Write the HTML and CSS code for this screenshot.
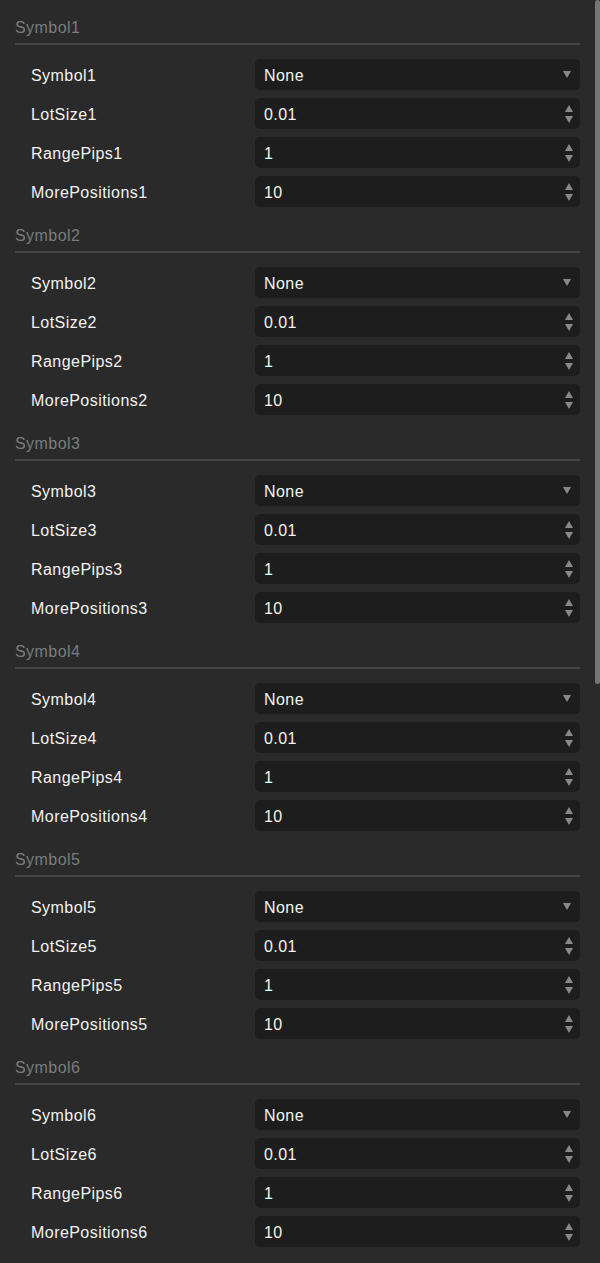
FILE: index.html
```html
<!DOCTYPE html>
<html>
<head>
<meta charset="utf-8">
<link rel="stylesheet" href="styles.css">
</head>
<body>
<div class="panel">
  <div id="sections"></div>
</div>
<div class="scroll-thumb"></div>
<script>
  var html = '';
  for (var i = 1; i <= 6; i++) {
    html += '<section class="group">' +
      '<div class="group-title">Symbol' + i + '</div>' +
      '<div class="rows">' +
        '<div class="row"><span class="label">Symbol' + i + '</span><div class="field select"><span class="value">None</span><span class="caret"></span></div></div>' +
        '<div class="row"><span class="label">LotSize' + i + '</span><div class="field spin"><span class="value">0.01</span><span class="spinner"><i class="up"></i><i class="down"></i></span></div></div>' +
        '<div class="row"><span class="label">RangePips' + i + '</span><div class="field spin"><span class="value">1</span><span class="spinner"><i class="up"></i><i class="down"></i></span></div></div>' +
        '<div class="row"><span class="label">MorePositions' + i + '</span><div class="field spin"><span class="value">10</span><span class="spinner"><i class="up"></i><i class="down"></i></span></div></div>' +
      '</div>' +
    '</section>';
  }
  document.getElementById('sections').innerHTML = html;
</script>
</body>
</html>
```

FILE: styles.css
```css
html, body {
  margin: 0;
  padding: 0;
  background: #2a2a2a;
  height: 1263px;
  overflow: hidden;
}
body {
  font-family: "Liberation Sans", Arial, sans-serif;
  font-size: 16px;
  letter-spacing: 0.45px;
  color: #e8e8e8;
}
.panel {
  padding: 0 20px 0 15px;
}
.group {
  padding-bottom: 1px;
}
.group-title {
  padding-top: 18px;
  line-height: 20px;
  padding-bottom: 5px;
  border-bottom: 2px solid #464646;
  color: #7c7c7c;
}
.rows {
  display: flex;
  flex-direction: column;
  gap: 8px;
  padding-top: 14px;
}
.row {
  display: flex;
  align-items: center;
  height: 31px;
}
.label {
  width: 224px;
  padding-left: 16px;
  padding-top: 2px;
  color: #f2f2f2;
}
.field {
  flex: 1;
  height: 31px;
  background: #1d1d1d;
  border-radius: 5px;
  display: flex;
  align-items: center;
  justify-content: space-between;
  padding: 2px 7px 0 9px;
  box-sizing: border-box;
}
.value {
  color: #f4f4f4;
}
.caret {
  width: 0;
  height: 0;
  border-left: 4.5px solid transparent;
  border-right: 4.5px solid transparent;
  border-top: 7px solid #8a8a8a;
  margin-right: 2px;
  margin-bottom: 2px;
}
.spinner {
  display: flex;
  flex-direction: column;
  gap: 4px;
  margin-bottom: 2px;
}
.spinner i {
  display: block;
  width: 0;
  height: 0;
  border-left: 4.5px solid transparent;
  border-right: 4.5px solid transparent;
}
.spinner .up {
  border-bottom: 7px solid #8a8a8a;
}
.spinner .down {
  border-top: 7px solid #8a8a8a;
}
.scroll-thumb {
  position: absolute;
  top: 0;
  right: 0;
  width: 5px;
  height: 684px;
  background: #767676;
  border-radius: 3px;
}
```
